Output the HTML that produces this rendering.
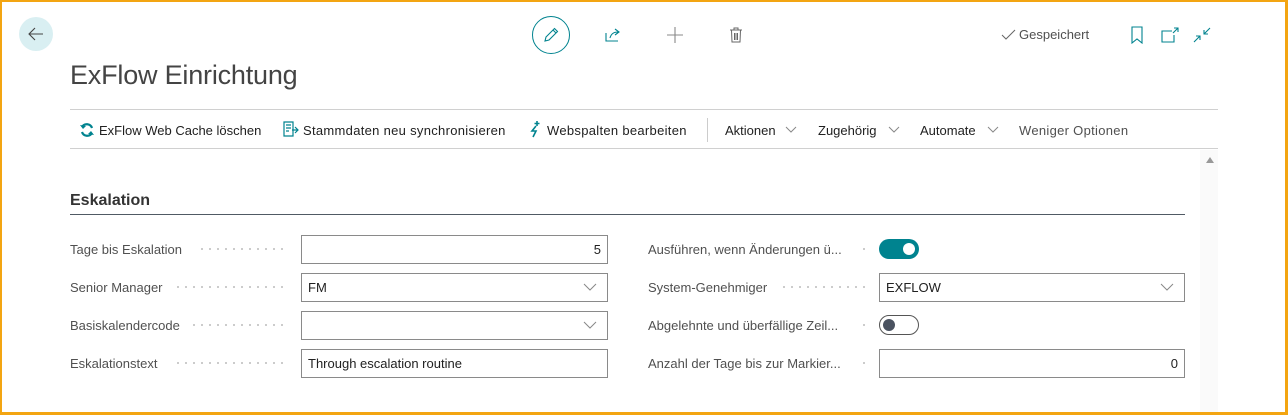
<!DOCTYPE html>
<html><head><meta charset="utf-8"><style>
*{box-sizing:border-box;margin:0;padding:0}
body{width:1288px;height:415px;overflow:hidden;background:#fff;font-family:"Liberation Sans",sans-serif;color:#212121;position:relative}
.frame{position:absolute;left:0;top:0;width:1288px;height:415px;border:2px solid #f3a512;border-right-width:3px;border-bottom-width:3px}
.abs{position:absolute}
.t{font-size:13px;white-space:nowrap}
.lbl{position:absolute;font-size:13px;color:#505050;white-space:nowrap}
.dots{position:absolute;height:2px;background-image:radial-gradient(circle,#bbb 0.8px,transparent 1px);background-size:8px 2px}
.inp{position:absolute;height:29px;border:1px solid #8a8a8a;background:#fff;font-size:13px;line-height:27px;padding:0 6px;color:#212121}
.chev{position:absolute;right:10px;top:9px}
</style></head><body>
<div class="abs" style="left:19px;top:17px;width:34px;height:34px;border-radius:50%;background:#d9eff2"></div>
<svg class="abs" style="left:26px;top:24px" width="20" height="20" viewBox="0 0 20 20"><path d="M17 10H3M9 4L3 10l6 6" fill="none" stroke="#444" stroke-width="1.1"/></svg>

<div class="abs" style="left:532px;top:16px;width:38px;height:38px;border-radius:50%;border:1.3px solid #00838f"></div>
<svg class="abs" style="left:541px;top:25px" width="20" height="20" viewBox="0 0 20 20"><path d="M4 16l1-4L13.5 3.5l3 3L8 15zM12 5l3 3" fill="none" stroke="#00838f" stroke-width="1.1"/></svg>
<svg class="abs" style="left:603px;top:25px" width="20" height="20" viewBox="0 0 20 20"><path d="M3 8v8h12M7 13c1-4 4-6 8-6M12 4l4 3-4 3" fill="none" stroke="#00838f" stroke-width="1.1"/></svg>
<svg class="abs" style="left:665px;top:25px" width="20" height="20" viewBox="0 0 20 20"><path d="M10 2v16M2 10h16" stroke="#888" stroke-width="1.1"/></svg>
<svg class="abs" style="left:726px;top:25px" width="20" height="20" viewBox="0 0 20 20"><path d="M4 5h12M8 5V3h4v2M5.5 5l.5 12h8l.5-12M8.5 8v7M10 8v7M11.5 8v7" fill="none" stroke="#666" stroke-width="1"/></svg>

<svg class="abs" style="left:1001px;top:28px" width="16" height="14" viewBox="0 0 16 14"><path d="M1 7l4 4 9-9" fill="none" stroke="#666" stroke-width="1"/></svg>
<div class="abs t" style="left:1019px;top:27px;color:#505050">Gespeichert</div>
<svg class="abs" style="left:1130px;top:26px" width="14" height="18" viewBox="0 0 14 18"><path d="M2 1h10v16l-5-4-5 4z" fill="none" stroke="#00838f" stroke-width="1.1"/></svg>
<svg class="abs" style="left:1160px;top:26px" width="20" height="18" viewBox="0 0 20 18"><path d="M12 5H2v11h12V9M14 2h4v4M18 2l-5 5" fill="none" stroke="#00838f" stroke-width="1.1"/></svg>
<svg class="abs" style="left:1192px;top:26px" width="20" height="18" viewBox="0 0 20 18"><path d="M2 16l6-6M4 10h4v4M18 2l-6 6M12 4v4h4" fill="none" stroke="#00838f" stroke-width="1.1"/></svg>

<div class="abs" style="left:70px;top:60px;font-size:27px;color:#444;letter-spacing:-0.2px">ExFlow Einrichtung</div>

<div class="abs" style="left:70px;top:109px;width:1148px;height:1px;background:#d0d0d0"></div>
<div class="abs" style="left:70px;top:148px;width:1148px;height:1px;background:#d0d0d0"></div>

<svg class="abs" style="left:79px;top:122px" width="16" height="16" viewBox="0 0 16 16"><path d="M13 6A5.5 5.5 0 0 0 3 5M3 10a5.5 5.5 0 0 0 10 1" fill="none" stroke="#00838f" stroke-width="2.2"/><path d="M1 3l3 4 3-3zM15 13l-3-4-3 3z" fill="#00838f"/></svg>
<div class="abs t" style="left:99px;top:123px">ExFlow Web Cache löschen</div>
<svg class="abs" style="left:282px;top:121px" width="18" height="18" viewBox="0 0 18 18"><path d="M2 1h9v14H2zM4 4h5M4 7h5M4 10h3M10 9h6M13 6l3 3-3 3" fill="none" stroke="#00838f" stroke-width="1.2"/></svg>
<div class="abs t" style="left:303px;top:123px;letter-spacing:0.3px">Stammdaten neu synchronisieren</div>
<svg class="abs" style="left:528px;top:120px" width="14" height="18" viewBox="0 0 14 18"><path d="M8 6L4 11h4l-3 6M9 1v5M6.5 3.5h5" fill="none" stroke="#00838f" stroke-width="1.6"/></svg>
<div class="abs t" style="left:547px;top:123px;letter-spacing:0.3px">Webspalten bearbeiten</div>
<div class="abs" style="left:707px;top:118px;width:1px;height:24px;background:#ccc"></div>
<div class="abs t" style="left:725px;top:123px">Aktionen</div>
<svg class="abs" style="left:785px;top:126px" width="12" height="8"><path d="M1 1l5 5 5-5" fill="none" stroke="#888"/></svg>
<div class="abs t" style="left:818px;top:123px">Zugehörig</div>
<svg class="abs" style="left:888px;top:126px" width="12" height="8"><path d="M1 1l5 5 5-5" fill="none" stroke="#888"/></svg>
<div class="abs t" style="left:920px;top:123px">Automate</div>
<svg class="abs" style="left:987px;top:126px" width="12" height="8"><path d="M1 1l5 5 5-5" fill="none" stroke="#888"/></svg>
<div class="abs t" style="left:1019px;top:123px;color:#505050;letter-spacing:0.3px">Weniger Optionen</div>

<div class="abs" style="left:1200px;top:150px;width:18px;height:263px;background:#fafafa"></div>
<svg class="abs" style="left:1205px;top:156px" width="10" height="8"><path d="M1 7l4-6 4 6z" fill="#999"/></svg>

<div class="abs" style="left:70px;top:192px;font-size:16px;font-weight:bold;color:#333">Eskalation</div>
<div class="abs" style="left:70px;top:214px;width:1115px;height:1px;background:#505a64"></div>

<div class="lbl" style="left:70px;top:242px">Tage bis Eskalation</div><div class="dots" style="left:198px;top:248px;width:90px"></div>
<div class="inp" style="left:301px;top:235px;width:307px;text-align:right">5</div>
<div class="lbl" style="left:70px;top:280px">Senior Manager</div><div class="dots" style="left:174px;top:286px;width:114px"></div>
<div class="inp" style="left:301px;top:273px;width:307px">FM<svg class="chev" width="14" height="8"><path d="M1 1l6 6 6-6" fill="none" stroke="#888"/></svg></div>
<div class="lbl" style="left:70px;top:318px">Basiskalendercode</div><div class="dots" style="left:190px;top:324px;width:98px"></div>
<div class="inp" style="left:301px;top:311px;width:307px"><svg class="chev" width="14" height="8"><path d="M1 1l6 6 6-6" fill="none" stroke="#888"/></svg></div>
<div class="lbl" style="left:70px;top:356px">Eskalationstext</div><div class="dots" style="left:174px;top:362px;width:114px"></div>
<div class="inp" style="left:301px;top:349px;width:307px">Through escalation routine</div>

<div class="lbl" style="left:648px;top:242px">Ausführen, wenn Änderungen ü...</div><div class="dots" style="left:860px;top:248px;width:8px"></div>
<div class="abs" style="left:879px;top:239px;width:40px;height:20px;border-radius:10px;background:#00838f"></div>
<div class="abs" style="left:903px;top:243px;width:12px;height:12px;border-radius:50%;background:#fff"></div>
<div class="lbl" style="left:648px;top:280px">System-Genehmiger</div><div class="dots" style="left:780px;top:286px;width:88px"></div>
<div class="inp" style="left:879px;top:273px;width:306px">EXFLOW<svg class="chev" width="14" height="8"><path d="M1 1l6 6 6-6" fill="none" stroke="#888"/></svg></div>
<div class="lbl" style="left:648px;top:318px">Abgelehnte und überfällige Zeil...</div><div class="dots" style="left:860px;top:324px;width:8px"></div>
<div class="abs" style="left:879px;top:315px;width:40px;height:20px;border-radius:10px;border:1px solid #555"></div>
<div class="abs" style="left:883px;top:319px;width:12px;height:12px;border-radius:50%;background:#4a5260"></div>
<div class="lbl" style="left:648px;top:356px">Anzahl der Tage bis zur Markier...</div><div class="dots" style="left:860px;top:362px;width:8px"></div>
<div class="inp" style="left:879px;top:349px;width:306px;text-align:right">0</div>

<div class="frame"></div>
</body></html>
